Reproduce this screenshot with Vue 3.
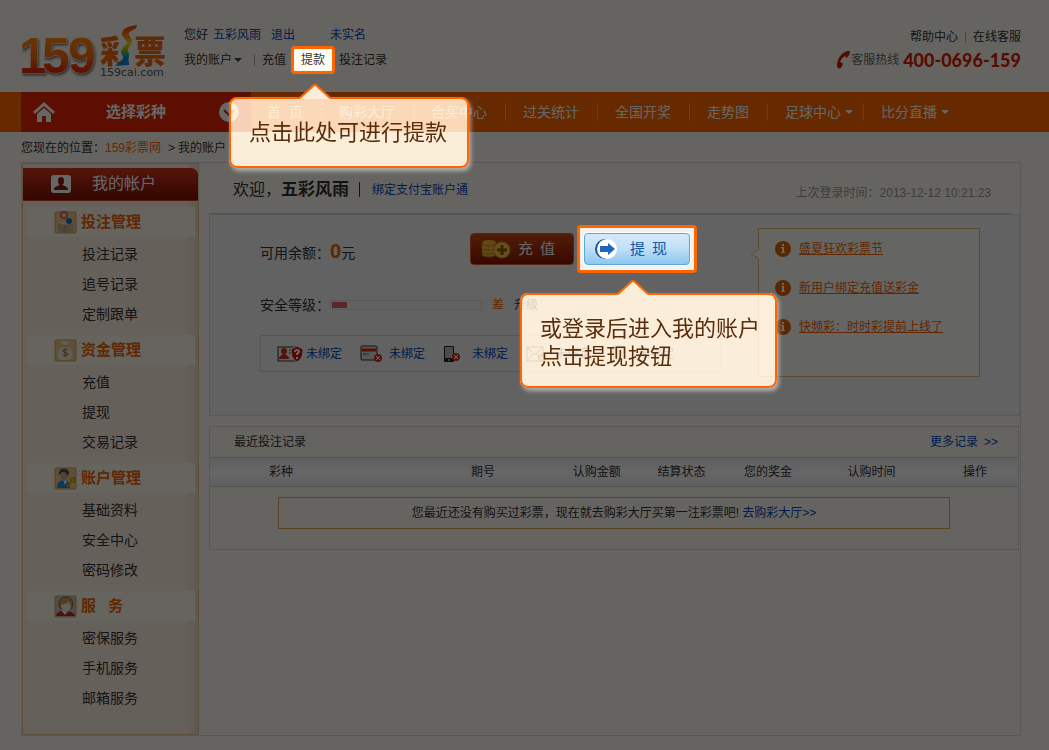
<script setup>
const navItems = [
  { label: '购彩大厅' },
  { label: '合买中心' },
  { label: '过关统计' },
  { label: '全国开奖' },
  { label: '走势图' },
  { label: '足球中心', more: true },
  { label: '比分直播', more: true }
]

const groups = [
  { icon: 'box', title: '投注管理', items: ['投注记录', '追号记录', '定制跟单'] },
  { icon: 'bag', title: '资金管理', items: ['充值', '提现', '交易记录'] },
  { icon: 'user', title: '账户管理', items: ['基础资料', '安全中心', '密码修改'] },
  { icon: 'service', title: '服', title2: '务', items: ['密保服务', '手机服务', '邮箱服务'] }
]

const binds = ['id', 'card', 'phone', 'mail', 'question']
const notices = ['盛夏狂欢彩票节', '新用户绑定充值送彩金', '快频彩：时时彩提前上线了']
const columns = ['彩种', '期号', '认购金额', '结算状态', '您的奖金', '认购时间', '操作']
</script>

<template>
  <div class="page">
    <header class="top">
      <a class="logo" href="#" aria-label="159彩票">
        <svg width="150" height="64" viewBox="20 20 150 64">
          <defs>
            <linearGradient id="flame" x1="0" y1="35" x2="0" y2="75" gradientUnits="userSpaceOnUse">
              <stop offset="0" stop-color="#ff8a10" />
              <stop offset="0.55" stop-color="#f96a10" />
              <stop offset="1" stop-color="#d81e06" />
            </linearGradient>
            <linearGradient id="ribbon" x1="0" y1="25" x2="0" y2="66" gradientUnits="userSpaceOnUse">
              <stop offset="0" stop-color="#e8380d" />
              <stop offset="0.25" stop-color="#ff7a00" />
              <stop offset="0.45" stop-color="#ffd21a" />
              <stop offset="0.62" stop-color="#7cc520" />
              <stop offset="0.75" stop-color="#15a0c8" />
              <stop offset="1" stop-color="#0a7ad0" />
            </linearGradient>
            <clipPath id="half"><rect x="98" y="30" width="21" height="40" /></clipPath>
          </defs>
          <text class="digits" x="19 42 68" y="73" fill="url(#flame)">159</text>
          <text class="brand" x="100" y="63" clip-path="url(#half)">彩</text>
          <text class="brand" x="134" y="63">票</text>
          <path d="M137 25c-8 1-15 3-15 9 0 4 6 6 5 9-1 3-6 5-6 9 0 3 3 4 2 7l5 0c2-3 1-5 0-8-1-3 4-6 4-10 0-3-4-5-3-8 1-3 8-3 8-8z" fill="url(#ribbon)" />
          <path d="M128 54l1 11-14 1z" fill="#0a8bd8" />
          <text class="domain" x="100" y="76">159cai.com</text>
        </svg>
      </a>
      <div class="user">
        <div class="line">
          <span>您好</span>
          <a class="blue name" href="#">五彩风雨</a>
          <a class="blue quit" href="#">退出</a>
          <a class="blue" href="#">未实名</a>
        </div>
        <div class="line">
          <a class="mine" href="#">我的账户<i class="caret"></i></a>
          <i class="bar"></i>
          <a href="#">充值</a>
          <div class="spot spot-link">
            <a href="#">提款</a>
            <div class="tip tip-link">
              <svg class="arrow" width="32" height="15" viewBox="0 0 32 15"><path d="M1 15v-2L16 1l15 12v2z" fill="#faedd9" /><path d="M1 14L14 2q2-2 4 0l13 12" fill="none" stroke="#ff6600" stroke-width="2" /></svg>
              点击此处可进行提款
            </div>
          </div>
          <a href="#">投注记录</a>
        </div>
      </div>
      <div class="help">
        <div class="help-links"><a href="#">帮助中心</a><i class="bar"></i><a href="#">在线客服</a></div>
        <div class="hotline">
          <svg width="15" height="20" viewBox="0 0 15 20"><path d="M12 1C6 2 1 8 1 16c0 2 2 3 4 2l2-4c0-1-2-2-3-2 1-3 3-5 5-6l1 2c2-1 4-4 4-6 0-1-1-1-2-1z" fill="#d02000" /></svg>
          <span>客服热线</span><strong>400-0696-159</strong>
        </div>
      </div>
    </header>

    <nav class="nav">
      <div class="pick">
        <a href="#" aria-label="首页">
          <svg width="24" height="22" viewBox="0 0 24 22"><path d="M12 1l11 10-2 2-9-8-9 8-2-2zM12 7l7 6v8h-5v-6h-4v6H5v-8z" fill="#fff" /></svg>
        </a>
        <b>选择彩种</b>
        <svg width="20" height="20" viewBox="0 0 20 20"><circle cx="10" cy="10" r="10" fill="#fff" /><path d="M5 8l5 5 5-5" fill="none" stroke="#d82800" stroke-width="2" /></svg>
      </div>
      <a class="nav-home" href="#"><span>首</span><span>页</span></a>
      <a v-for="n in navItems" :key="n.label" class="nav-item" :class="{ more: n.more }" href="#">{{ n.label }}<i v-if="n.more" class="caret light"></i></a>
    </nav>

    <div class="crumb"><span>您现在的位置：</span><a href="#">159彩票网</a><span class="gt">&gt;</span><span>我的账户</span></div>

    <div class="frame">
      <aside class="side">
        <h2>
          <svg width="20" height="18" viewBox="0 0 20 18"><rect width="20" height="18" rx="3" fill="#fff" /><ellipse cx="10" cy="6" rx="3" ry="4" fill="#901808" /><path d="M3 15c0-4 3-3 5-5h4c2 2 5 1 5 5z" fill="#901808" /></svg>
          我的帐户
        </h2>
        <section v-for="g in groups" :key="g.icon">
          <h3>
            <svg width="23" height="23" viewBox="0 0 23 23">
              <rect x="1" y="1" width="21" height="21" rx="1" :fill="g.icon === 'service' ? '#c0c0b8' : '#e8c890'" stroke="#dba050" />
              <g v-if="g.icon === 'box'">
                <path d="M4 12l7-2 8 2v8l-8 2-7-2z" fill="#c9b08c" /><path d="M4 12l7 2 8-2-8-2z" fill="#ead8b8" /><path d="M11 14v8" stroke="#a48a64" />
                <circle cx="10" cy="4" r="4" fill="#e86050" /><circle cx="10" cy="4" r="2" fill="#fbdcd8" /><circle cx="15" cy="10" r="3" fill="#1878b0" />
              </g>
              <g v-else-if="g.icon === 'bag'">
                <path d="M7 2h8l-2 5c5 3 7 8 5 12-2 3-12 3-14 0-1-4 1-9 5-12z" fill="#f4e7cd" /><path d="M8 7h6" stroke="#b39060" />
                <path d="M14 11c-2-2-5-1-5 1s5 1 5 3-3 2-5 1M11 9v9" fill="none" stroke="#87704d" />
              </g>
              <g v-else-if="g.icon === 'user'">
                <path d="M3 21c0-6 3-7 6-8 5 0 7 3 7 8z" fill="#1c8cd0" /><path d="M9 13l2 5 2-4z" fill="#fff" /><ellipse cx="10" cy="8" rx="4" ry="5" fill="#c9a585" /><path d="M5 8c-1-5 3-7 6-6 4 0 5 4 3 7-1-4-4-4-6-4z" fill="#47494f" />
                <circle cx="19" cy="13" r="2" fill="none" stroke="#d99b10" stroke-width="2" /><path d="M17 15l-4 5" stroke="#d99b10" stroke-width="2" />
              </g>
              <g v-else>
                <path d="M2 21c1-5 5-5 9-5s9 1 10 5z" fill="#c02430" /><path d="M7 15l4 5 4-5z" fill="#fff" /><circle cx="12" cy="9" r="7" fill="#d59a45" stroke="#626870" /><path d="M7 10c3 0 7-3 8-3 4 7 0 10-4 10-3-1-4-4-4-7z" fill="#f6ecd9" />
              </g>
            </svg>
            <span>{{ g.title }}</span><span v-if="g.title2" class="second">{{ g.title2 }}</span>
          </h3>
          <ul><li v-for="i in g.items" :key="i"><a href="#">{{ i }}</a></li></ul>
        </section>
      </aside>

      <main class="main">
        <div class="welcome">
          <span class="hi">欢迎，<b>五彩风雨</b></span><i class="bar dark"></i><a class="blue" href="#">绑定支付宝账户通</a>
          <span class="last">上次登录时间：2013-12-12 10:21:23</span>
        </div>

        <section class="account">
          <div class="info">
            <div class="money">
              <div class="balance"><span>可用余额：</span><strong>0</strong><span>元</span></div>
              <div class="actions">
                <button class="btn charge" type="button">
                  <svg width="30" height="20" viewBox="0 0 30 20">
                    <path d="M1 4c0-4 14-4 14 0v11c0 4-14 4-14 0z" fill="#f0b830" /><path d="M1 4c0 4 14 4 14 0M1 8c0 4 14 4 14 0M1 12c0 4 14 4 14 0M1 15c0 4 14 4 14 0" fill="none" stroke="#c48418" />
                    <circle cx="21" cy="11" r="8" fill="#f4ca40" stroke="#d09a28" /><path d="M21 6v10M16 11h10" stroke="#9a5000" stroke-width="3" />
                  </svg>
                  <span>充</span><span>值</span>
                </button>
                <div class="spot spot-button">
                  <button class="btn draw" type="button">
                    <svg width="22" height="22" viewBox="0 0 22 22"><circle cx="10" cy="11" r="10" fill="#17549a" /><circle cx="12" cy="11" r="10" fill="#fff" /><path d="M5 8h8V5l7 6-7 6v-3H5z" fill="#2068bd" /></svg>
                    <span>提</span><span>现</span>
                  </button>
                  <div class="tip tip-button">
                    <svg class="arrow" width="32" height="15" viewBox="0 0 32 15"><path d="M1 15v-2L16 1l15 12v2z" fill="#faedd9" /><path d="M1 14L14 2q2-2 4 0l13 12" fill="none" stroke="#ff6600" stroke-width="2" /></svg>
                    或登录后进入我的账户<br />点击提现按钮
                  </div>
                </div>
              </div>
            </div>
            <div class="level">
              <span>安全等级：</span><div class="meter"><i></i></div><span class="bad">差</span><a href="#">升级</a>
            </div>
            <ul class="binds">
              <li v-for="b in binds" :key="b">
                <svg width="27" height="18" viewBox="0 0 27 18">
                  <g v-if="b === 'id'">
                    <rect x="1" y="2" width="19" height="14" fill="#eee" stroke="#333" /><circle cx="7" cy="6" r="3" fill="#c83020" /><path d="M2 14c0-4 3-3 4-6h2c1 3 4 2 4 6z" fill="#c83020" /><path d="M12 5h4M12 8h4" stroke="#444" />
                    <path d="M20 1l6 3c0 6-1 10-6 13-5-3-6-7-6-13z" fill="#c81808" stroke="#fff" /><path d="M18 7c0-3 5-2 4 0l-2 2v1M20 12v2" fill="none" stroke="#fff" stroke-width="2" />
                  </g>
                  <g v-else-if="b === 'card'">
                    <rect x="1" y="1" width="16" height="14" rx="1" fill="#ddd" stroke="#333" /><path d="M2 5h14" stroke="#d02818" stroke-width="3" /><path d="M3 9h3M7 9h2" stroke="#444" />
                    <circle cx="18" cy="13" r="4" fill="#d83020" /><path d="M16 11l4 4M20 11l-4 4" stroke="#fff" />
                  </g>
                  <g v-else-if="b === 'phone'">
                    <rect x="1" y="1" width="10" height="16" rx="1" fill="#222" /><rect x="2" y="2" width="8" height="11" fill="#bbb" /><path d="M5 15h2" stroke="#fff" />
                    <circle cx="13" cy="12" r="4" fill="#d83020" /><path d="M11 10l4 4M15 10l-4 4" stroke="#fff" />
                  </g>
                  <g v-else-if="b === 'mail'">
                    <path d="M1 2h16v14H1zM1 2l8 8 8-8M1 16l6-7M17 16l-6-7" fill="none" stroke="#555" /><circle cx="16" cy="13" r="4" fill="#e05030" /><path d="M14 11l4 4M18 11l-4 4" stroke="#fff" />
                  </g>
                  <g v-else><rect x="1" y="3" width="12" height="13" fill="#aaa" /><path d="M4 1h11v8" fill="none" stroke="#666" /></g>
                </svg>
                <a class="blue" href="#">未绑定</a>
              </li>
            </ul>
          </div>
          <aside class="notice">
            <svg class="beak" width="9" height="12" viewBox="0 0 9 12"><path d="M9 0v12L1 6z" fill="#fcfcfa" /><path d="M9 1L1 6l8 5" fill="none" stroke="#e6b877" /></svg>
            <ul>
              <li v-for="n in notices" :key="n">
                <svg width="16" height="16" viewBox="0 0 16 16"><circle cx="8" cy="8" r="8" fill="#e26200" /><path d="M7 3h2v2H7zM6 6h3v5h1v1H6v-1h1V7H6z" fill="#fff" /></svg>
                <a href="#">{{ n }}</a>
              </li>
            </ul>
          </aside>
        </section>

        <section class="records">
          <div class="records-top"><h4>最近投注记录</h4><a class="blue" href="#">更多记录&ensp;&gt;&gt;</a></div>
          <table>
            <thead><tr><th v-for="c in columns" :key="c">{{ c }}</th></tr></thead>
            <tbody><tr><td colspan="7"><p>您最近还没有购买过彩票，现在就去购彩大厅买第一注彩票吧! <a class="blue" href="#">去购彩大厅&gt;&gt;</a></p></td></tr></tbody>
          </table>
        </section>
      </main>
    </div>
    <div class="shade"></div>
  </div>
</template>

<style>
body { background: #fffaf0; }
</style>

<style scoped>
.page { font: 12px/18px "Liberation Sans", "Noto Sans CJK SC", sans-serif; color: #333; padding-bottom: 14px; background: #fffaf0; }
.page *, .page { box-sizing: border-box; }
a { color: inherit; text-decoration: none; }
ul, h2, h3, h4, p { margin: 0; padding: 0; list-style: none; }
svg { display: block; flex: none; }
button { font: inherit; }
.page .blue { color: #0048b8; }
.shade { position: fixed; inset: 0; background: rgba(0, 0, 0, 0.6); z-index: 10; pointer-events: none; }
.bar { width: 1px; height: 11px; background: #aaa; }
.caret { border: 4px solid transparent; border-top-color: #444; border-bottom: 0; }
.caret.light { border-top-color: #fff; }

.top { display: flex; height: 92px; padding: 20px 28px 0 20px; }
.logo { width: 164px; }
.logo svg { overflow: visible; }
.digits { font: bold 50px "Liberation Sans", sans-serif; stroke: #fff; stroke-width: 1px; paint-order: stroke; filter: drop-shadow(1px 2px 1px #777); }
.brand { font: 900 32px "Noto Sans CJK SC", sans-serif; fill: #f06a12; }
.domain { font: 11px "DejaVu Sans", sans-serif; fill: #555; }
.user { padding-top: 2px; }
.line { display: flex; align-items: center; height: 26px; white-space: nowrap; }
.line + .line { height: 24px; }
.name { margin: 0 10px 0 5px; }
.quit { margin-right: 35px; }
.mine { display: flex; align-items: center; gap: 2px; margin-right: 12px; }
.line .bar { margin-right: 7px; }
.help { margin-left: auto; padding-top: 8px; }
.help-links { display: flex; align-items: center; justify-content: flex-end; gap: 7px; }
.hotline { display: flex; align-items: center; height: 28px; color: #666; }
.hotline strong { font: 900 18px/20px Lato, sans-serif; color: #d82000; margin-left: 4px; }

.spot { position: relative; z-index: 11; border: 3px solid #ff6600; border-radius: 4px; }
.spot-link { background: #fffcf4; padding: 2px 7px; margin: 0 4px 0 5px; }
.spot-button { background: #f2f2f2; padding: 5px 4px; }
.tip { position: absolute; padding: 17px 15px 18px 18px; border: 2px solid #ff6600; border-radius: 8px; background: rgba(250, 235, 213, 0.86); backdrop-filter: brightness(2.5); box-shadow: 2px 3px 4px rgba(255, 255, 255, 0.5); color: #5a2d0c; font: 22px/28px "Noto Sans CJK SC", sans-serif; white-space: nowrap; }
.tip-link { left: -65px; top: 48px; padding-right: 20px; padding-bottom: 22px; }
.tip-button { left: -60px; top: 65px; }
.arrow { position: absolute; top: -15px; left: 68px; }
.tip-button .arrow { left: 95px; }

.nav { display: flex; align-items: center; height: 40px; padding-left: 21px; background: #ff6600; color: #fff; font-size: 14px; white-space: nowrap; }
.pick { display: flex; align-items: center; width: 230px; height: 40px; padding: 0 12px 0 11px; background: #e52600; }
.pick b { font-size: 15px; margin: 0 auto 0 50px; }
.nav-home { display: flex; gap: 8px; padding: 0 18px 0 16px; }
.nav-item { display: flex; align-items: center; gap: 4px; padding: 0 18px 0 17px; border-left: 1px solid #ff9a50; }
.nav-item.more { padding-right: 10px; }

.crumb { display: flex; align-items: center; height: 30px; padding: 2px 0 0 21px; }
.crumb a { color: #ff6600; }
.crumb .gt { margin: 0 3px 0 7px; }

.frame { display: flex; gap: 10px; margin: 0 28px 0 21px; border: 1px solid #e0dde0; }
.side { width: 177px; flex: none; border: 1px solid #e6c593; padding: 4px 0 15px; background: linear-gradient(90deg, #fff0e4 93%, #efdcc0); }
.side h2 { display: flex; align-items: center; gap: 21px; height: 33px; margin-bottom: 6px; padding-left: 28px; border-radius: 0 7px 0 0; border-bottom: 1px solid #e03a20; background: linear-gradient(#d83420, #7c1204); color: #fff; font-size: 16px; font-weight: normal; }
.side h3 { display: flex; align-items: center; height: 30px; margin: 0 3px 0 4px; padding-left: 27px; background: #fcfbec; color: #f26200; font-size: 15px; }
.side h3 svg { margin-right: 4px; }
.second { margin-left: 12px; }
.side ul { padding: 2px 0 6px 59px; font-size: 14px; line-height: 30px; }
.side ul a { display: block; }

.main { flex: 1; min-width: 0; }
.welcome { display: flex; align-items: center; height: 51px; margin-right: 9px; padding: 3px 20px 0 24px; border-bottom: 1px solid #e8c090; white-space: nowrap; }
.hi { font-size: 16px; }
.hi b { font-size: 17px; }
.bar.dark { height: 15px; background: #333; margin: 0 12px 0 10px; }
.last { margin-left: auto; color: #999; padding-top: 6px; }

.account { display: flex; align-items: flex-start; gap: 37px; height: 202px; padding: 10px 39px 0 50px; border: 1px solid #dddde0; background: #f4f4f4; }
.info { flex: 1; white-space: nowrap; }
.money { display: flex; align-items: center; height: 48px; padding-right: 24px; font-size: 14px; }
.balance { display: flex; align-items: baseline; padding-top: 6px; }
.money strong { font-size: 20px; color: #f26200; }
.actions { display: flex; align-items: center; gap: 3px; margin-left: auto; }
.btn { display: flex; align-items: center; height: 32px; padding: 0 0 0 10px; border-radius: 4px; font-size: 15px; line-height: 20px; }
.btn span + span { margin-left: 7px; }
.charge { width: 104px; border: 1px solid #d86030; background: linear-gradient(#cc4c18, #8c1400); color: #fff; }
.charge svg { margin-right: 7px; }
.draw { width: 106px; border: 1px solid #5aaae0; background: linear-gradient(#d4eafa, #c2e1f7 45%, #8ec6ee); color: #1458ac; box-shadow: 0 0 0 1px #fff; }
.draw svg { margin-right: 13px; }
.level { display: flex; align-items: center; height: 20px; margin: 22px 0 20px; font-size: 14px; }
.meter { width: 152px; height: 10px; padding: 1px; border: 1px solid #ddd; }
.meter i { display: block; width: 10%; height: 6px; background: #e06068; }
.level .bad { margin: 0 10px; font-size: 12px; color: #f26200; }
.level a { font-size: 12px; }
.binds { display: grid; grid-template-columns: repeat(5, 83px); height: 37px; padding-left: 16px; border: 1px solid #d6d6d6; }
.binds li { display: flex; align-items: center; gap: 2px; }
.notice { position: relative; width: 222px; height: 149px; margin-top: 3px; padding: 0 16px; border: 1px solid #e6b877; background: #fcfcfa; color: #f26200; }
.beak { position: absolute; left: -9px; top: 19px; }
.notice li { display: flex; align-items: center; gap: 8px; height: 39px; white-space: nowrap; }
.notice a { text-decoration: underline; }

.records { margin: 10px 1px 0 0; border: 1px solid #dddde0; }
.records-top { display: flex; justify-content: space-between; align-items: center; height: 30px; padding: 0 20px 0 24px; }
.records h4 { font-size: 12px; font-weight: normal; }
table { width: 100%; border-collapse: collapse; table-layout: fixed; }
th { height: 29px; padding: 0; border: solid #cfcfd4; border-width: 1px 0; background: linear-gradient(#f0f0f0, #fff 50%, #eee); font-weight: normal; text-align: left; }
th:nth-child(1) { width: 32.3%; padding-left: 59px; }
th:nth-child(2) { width: 12.6%; }
th:nth-child(3) { width: 10.5%; }
th:nth-child(4) { width: 10.7%; }
th:nth-child(5) { width: 12.8%; }
th:nth-child(6) { width: 14.3%; }
td { padding: 10px 68px 20px; }
td p { padding: 6px; border: 1px solid #e0a850; text-align: center; }
</style>
